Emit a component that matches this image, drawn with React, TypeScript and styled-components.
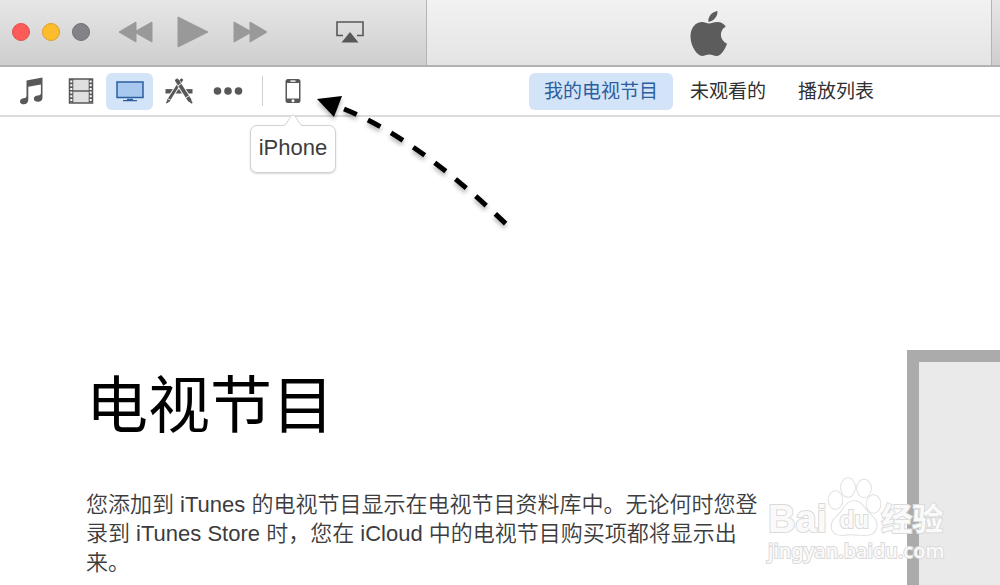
import React from "react";
import styled, { createGlobalStyle } from "styled-components";

const GlobalStyle = createGlobalStyle`
  *, *::before, *::after { box-sizing: border-box; }
  body {
    margin: 0;
    background: #fff;
    color: #3c3c3e;
    font-family: "Liberation Sans", "Noto Sans CJK SC", sans-serif;
  }
`;

const Window = styled.div`
  position: relative;
  display: flex;
  flex-direction: column;
  min-height: 100vh;
  overflow: hidden;
`;

const TitleBar = styled.header`
  display: flex;
  height: 67px;
  border-bottom: 2px solid #b2b2b2;
  background: linear-gradient(#e7e7e7, #cecece);
`;

const PlayerControls = styled.div`
  display: flex;
  align-items: center;
  flex: 0 0 427px;
  padding: 0 0 1px 12px;
  border-right: 1px solid #b4b4b4;
`;

const Lights = styled.div`
  display: flex;
  gap: 12px;
  margin-right: 28px;
`;

const Light = styled.button<{ $fill: string; $edge: string }>`
  width: 18px;
  height: 18px;
  padding: 0;
  border: 1px solid ${(p) => p.$edge};
  border-radius: 50%;
  background: ${(p) => p.$fill};
`;

const IconButton = styled.button`
  display: flex;
  padding: 0;
  border: 0;
  background: none;
`;

const Transport = styled.div`
  display: flex;
  align-items: center;
  gap: 24px;
`;

const AirPlayButton = styled(IconButton)`
  margin-left: 68px;
`;

const Display = styled.div`
  display: flex;
  align-items: center;
  flex: 1;
  padding: 2px 0 0 263px;
  border-right: 1px solid #b4b4b4;
  background: linear-gradient(#f2f2f2, #e4e4e4);
`;

const BarEnd = styled.div`
  flex: 0 0 8px;
`;

const Toolbar = styled.nav`
  display: flex;
  align-items: center;
  height: 50px;
  border-bottom: 2px solid #dcdcdc;
`;

const Libraries = styled.div`
  display: flex;
  align-items: center;
  flex: 0 0 529px;
  padding-left: 8px;
`;

const LibraryButton = styled(IconButton)<{ $active?: boolean }>`
  align-items: center;
  justify-content: center;
  width: 47px;
  height: 37px;
  margin-right: 2px;
  border-radius: 6px;
  background: ${(p) => (p.$active ? "#d3e3f8" : "none")};
`;

const Divider = styled.div`
  width: 1px;
  height: 30px;
  margin: 0 6px 0 9px;
  background: #cfcfcf;
`;

const Device = styled.div`
  position: relative;
`;

const Popover = styled.div`
  position: absolute;
  top: 52px;
  left: -19px;
  width: 86px;
  height: 48px;
  border: 1px solid #d2d2d2;
  border-radius: 7px;
  background: #fff;
  box-shadow: 0 1px 2px rgba(0, 0, 0, 0.16);
  font-size: 22px;
  line-height: 43px;
  text-align: center;
`;

const PopoverTip = styled.svg`
  position: absolute;
  top: -12px;
  left: 32px;
`;

const Tabs = styled.div`
  display: flex;
  gap: 2px;
`;

const Tab = styled.button<{ $active?: boolean }>`
  height: 37px;
  padding: 1px 15px 0;
  border: 0;
  border-radius: 6px;
  background: ${(p) => (p.$active ? "#d3e3f8" : "none")};
  color: ${(p) => (p.$active ? "#2b5f9e" : "#303032")};
  font-family: inherit;
  font-size: 19px;
  line-height: 28px;
  white-space: nowrap;
`;

const Main = styled.main`
  display: flex;
  flex: 1;
  justify-content: space-between;
  padding: 233px 0 0 86px;
`;

const Intro = styled.section`
  flex: 0 1 680px;
`;

const Title = styled.h1`
  margin: 0 0 38px;
  padding-top: 12px;
  color: #000;
  font-size: 62px;
  font-weight: 400;
  line-height: 90px;
`;

const Description = styled.p`
  margin: 0;
  font-size: 22px;
  font-weight: 350;
  line-height: 29px;
`;

const Artwork = styled.aside`
  flex: 0 0 93px;
  border-top: 12px solid #ababab;
  border-left: 12px solid #ababab;
  background: #eaeaea;
`;

const Pointer = styled.svg`
  position: absolute;
  top: 84px;
  left: 306px;
  pointer-events: none;
  filter: drop-shadow(0 3px 2px rgba(0, 0, 0, 0.3));
`;

const Watermark = styled.div`
  position: absolute;
  right: 54px;
  bottom: 20px;
  width: 178px;
  color: #fafafa;
  -webkit-text-stroke: 2px #dadada;
  paint-order: stroke fill;
  font-weight: 700;
  white-space: nowrap;
`;

const Brand = styled.div`
  display: flex;
  align-items: center;
  height: 36px;
  font-size: 38px;
`;

const Paw = styled.div`
  position: relative;
  width: 54px;
  height: 60px;
  margin-top: -24px;
  font-size: 24px;
  line-height: 86px;
  text-align: center;
`;

const PawShape = styled.svg`
  position: absolute;
  inset: 0;
`;

const PawText = styled.span`
  position: relative;
`;

const BrandName = styled.span`
  margin-top: -5px;
  font-family: "Noto Sans CJK SC", sans-serif;
  font-size: 31px;
`;

const Site = styled.div`
  font-family: "Noto Sans", sans-serif;
  font-size: 20px;
  font-weight: 500;
  line-height: 28px;
`;

const Skip = ({ forward }: { forward?: boolean }) => (
  <svg width="35" height="22" viewBox="0 0 35 22" fill="#999">
    <path
      d={
        forward
          ? "M1 1 17 10V1L34 11 17 21V12L1 21Z"
          : "M34 1 18 10V1L1 11 18 21V12L34 21Z"
      }
      stroke="#999"
      strokeLinejoin="round"
    />
  </svg>
);

const AppleLogo = () => (
  <svg width="38" height="46" viewBox="0 0 38 46" fill="#5c5c5c">
    <path d="M27.500 0C27.800 5.500 23.500 10.500 18.300 10.700 17.800 5.500 22.300 .600 27.500 0Z" />
    <path d="M19 12.400C21.500 12.400 23.500 10.900 27.500 10.900 31 10.900 34 12.800 35.800 15.500 28.500 19.700 29.700 29.600 37 32.700 35 38.500 30.800 45 26.500 45 23.700 45 22.500 43.400 19.300 43.400 16 43.400 14.600 45 12 45 7.500 45 .500 35.500 .500 25.500 .500 16 6.300 11 12 11 14.800 11 17 12.400 19 12.400Z" />
  </svg>
);

const Music = () => (
  <svg width="24" height="28" viewBox="0 0 24 28" fill="#58585a">
    <path d="M6.500 3.500 22.500 .500V20.500C22.500 23.500 20.500 24.800 18 24.800 15.500 24.800 13.800 23.500 13.800 21.800 13.800 20 15.500 18.700 17.800 18.500 20.200 18.300 20.900 17.500 20.900 16V7.500L8.300 9.800V22.500C8.300 25.700 6.500 27.300 3.800 27.300 1.500 27.300 0 26 0 24.400 0 22.600 1.500 21.400 3.700 21.200 5.800 21 6.500 20.200 6.500 18.500Z" />
  </svg>
);

const Film = () => (
  <svg width="26" height="26" viewBox="0 0 26 26">
    <rect x="1.500" y="1" width="23" height="24" fill="#dfdfdf" stroke="#58585a" strokeWidth="1.500" />
    <path d="M3.300 1V25M22.700 1V25" stroke="#58585a" strokeWidth="4" />
    <path d="M3.300 2.500V25M22.700 2.500V25" stroke="#fff" strokeWidth="2" strokeDasharray="2 1.700" />
    <path d="M5 13H21" stroke="#58585a" strokeWidth="1.500" />
  </svg>
);

const Television = () => (
  <svg width="28" height="21" viewBox="0 0 28 21">
    <rect x="1" y="1" width="26" height="15.500" fill="#a9c8f0" stroke="#2b5f9e" strokeWidth="1.500" />
    <path d="M11 17.800H17V19H21V20.200H7V19H11Z" fill="#2b5f9e" />
  </svg>
);

const AppStore = () => (
  <svg width="28" height="26" viewBox="0 0 28 26" fill="none" stroke="#58585a">
    <path d="M.500 13.300H27.500" strokeWidth="4.400" />
    <path d="M16.500 2 4 21.500" strokeWidth="4.800" stroke="#fff" />
    <path d="M12 2.500 24.200 21.500" strokeWidth="5.600" stroke="#fff" />
    <path d="M16.500 2 4 21.500" strokeWidth="3" strokeLinecap="round" />
    <path d="M13 4 19 13.500" strokeWidth="5" stroke="#fff" />
    <path d="M12 2.500 24.500 22" strokeWidth="3.800" strokeLinecap="round" />
    <path d="M3.500 20.500 1.500 25 5.500 22.500Z" fill="#58585a" strokeWidth="1" />
    <path d="M24 22 26.500 24.500" strokeWidth="2" strokeLinecap="round" />
    <path d="M2.300 20.300 6.500 22.800M12.500 8 16.500 5.600M20.500 20 24 17.800" strokeWidth=".900" stroke="#fff" />
  </svg>
);

const More = () => (
  <svg width="30" height="8" viewBox="0 0 30 8" fill="#58585a">
    <circle cx="4.500" cy="4" r="3.800" />
    <circle cx="15" cy="4" r="3.800" />
    <circle cx="25.500" cy="4" r="3.800" />
  </svg>
);

const Phone = () => (
  <svg width="16" height="24" viewBox="0 0 16 24">
    <rect x=".500" width="15" height="24" rx="2.500" fill="#58585a" />
    <rect x="2" y="4" width="12" height="15.500" fill="#fff" />
    <rect x="5.500" y="1.400" width="5" height="1.400" fill="#fff" />
    <circle cx="8" cy="21.700" r="1.500" fill="#fff" />
  </svg>
);

export default function App() {
  return (
    <Window>
      <GlobalStyle />
      <TitleBar>
        <PlayerControls>
          <Lights>
            <Light aria-label="关闭" $fill="#fc5b57" $edge="#e2504b" />
            <Light aria-label="最小化" $fill="#fdbc2e" $edge="#dfa023" />
            <Light aria-label="缩放" $fill="#828288" $edge="#707076" />
          </Lights>
          <Transport>
            <IconButton aria-label="上一个"><Skip /></IconButton>
            <IconButton aria-label="播放">
              <svg width="32" height="32" viewBox="0 0 32 32">
                <path d="M1 1 31 16 1 31Z" fill="#999" stroke="#999" strokeLinejoin="round" />
              </svg>
            </IconButton>
            <IconButton aria-label="下一个"><Skip forward /></IconButton>
          </Transport>
          <AirPlayButton aria-label="隔空播放">
            <svg width="28" height="22" viewBox="0 0 28 22">
              <path d="M7 14.500H1V1H27V14.500H21" fill="none" stroke="#58585a" strokeWidth="1.600" />
              <path d="M14 11 22.500 21.500H5.500Z" fill="#58585a" />
            </svg>
          </AirPlayButton>
        </PlayerControls>
        <Display><AppleLogo /></Display>
        <BarEnd />
      </TitleBar>
      <Toolbar>
        <Libraries>
          <LibraryButton aria-label="音乐"><Music /></LibraryButton>
          <LibraryButton aria-label="影片"><Film /></LibraryButton>
          <LibraryButton aria-label="电视节目" $active><Television /></LibraryButton>
          <LibraryButton aria-label="应用程序"><AppStore /></LibraryButton>
          <LibraryButton aria-label="更多"><More /></LibraryButton>
          <Divider />
          <Device>
            <LibraryButton aria-label="iPhone"><Phone /></LibraryButton>
            <Popover>
              <PopoverTip width="20" height="13" viewBox="0 0 20 13">
                <path d="M0 12C4 12 6 1 10 1S16 12 20 12V13H0Z" fill="#fff" />
                <path d="M0 11.500C4 11.500 7 1 10 1S16 11.500 20 11.500" fill="none" stroke="#d2d2d2" />
              </PopoverTip>
              iPhone
            </Popover>
          </Device>
        </Libraries>
        <Tabs>
          <Tab $active>我的电视节目</Tab>
          <Tab>未观看的</Tab>
          <Tab>播放列表</Tab>
        </Tabs>
      </Toolbar>
      <Main>
        <Intro>
          <Title>电视节目</Title>
          <Description>
            您添加到 iTunes 的电视节目显示在电视节目资料库中。无论何时您登录到 iTunes Store
            时，您在 iCloud 中的电视节目购买项都将显示出来。
          </Description>
        </Intro>
        <Artwork />
      </Main>
      <Pointer width="220" height="160" viewBox="0 0 220 160">
        <path d="M11 15 36 12 28 33Z" />
        <path
          d="M38 25Q110 54 200 140"
          pathLength="200"
          fill="none"
          stroke="#000"
          strokeWidth="5"
          strokeDasharray="14 12.500"
        />
      </Pointer>
      <Watermark>
        <Brand>
          <span>Bai</span>
          <Paw>
            <PawShape width="54" height="60" viewBox="0 0 54 60" fill="#fff" fillOpacity=".9" stroke="#dadada" strokeWidth="1.500">
              <ellipse cx="8.500" cy="23" rx="7" ry="9" />
              <ellipse cx="21" cy="10.500" rx="7" ry="9.500" />
              <ellipse cx="37" cy="11.500" rx="7" ry="9" />
              <ellipse cx="46.500" cy="27" rx="7" ry="9" />
              <path d="M27 24C35 24 37 32 44 38 54 46 50 58 39 58 32 58 22 57 16 58 4 59 1 48 9 40 17 34 18 24 27 24Z" />
            </PawShape>
            <PawText>du</PawText>
          </Paw>
          <BrandName>经验</BrandName>
        </Brand>
        <Site>jingyan.baidu.com</Site>
      </Watermark>
    </Window>
  );
}
